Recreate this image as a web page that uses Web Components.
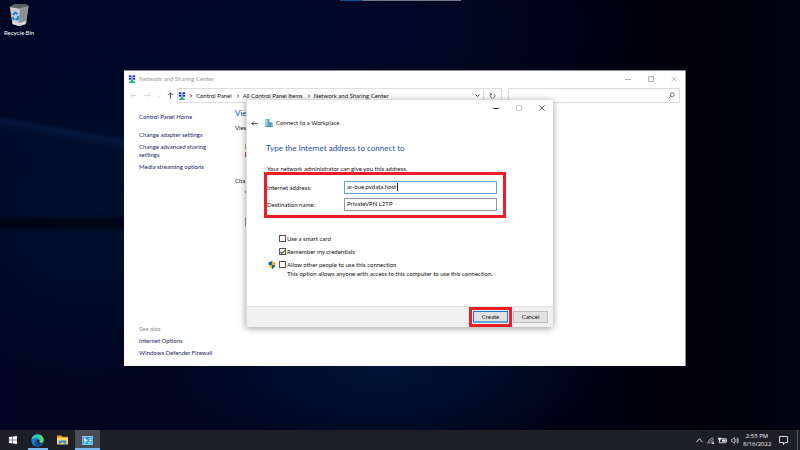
<!DOCTYPE html>
<html lang="en">
<head>
<meta charset="utf-8">
<title>Desktop</title>
<style>
html, body { margin: 0; height: 100%; }
body { font: 6px/8px Lato, "Open Sans", sans-serif; font-variant-ligatures: none; color: #111; overflow: hidden; }
</style>
</head>
<body>
<desk-top>
  <desktop-icon slot="icons">Recycle Bin</desktop-icon>
  <network-window slot="windows"></network-window>
  <connect-dialog slot="windows"></connect-dialog>
  <task-bar slot="taskbar"></task-bar>
</desk-top>
<script>
const define = (name, html, setup) => {
  const template = document.createElement('template');
  template.innerHTML = html;
  customElements.define(name, class extends HTMLElement {
    constructor() {
      super();
      this.attachShadow({ mode: 'open' }).append(template.content.cloneNode(true));
    }
    connectedCallback() { if (setup) setup(this, this.shadowRoot); }
  });
};

const base = `* { box-sizing: border-box; } svg { display: block; flex: none; }
button { font: inherit; color: inherit; background: none; border: 0; padding: 0; margin: 0; }
h1, h2, p, ul { margin: 0; padding: 0; font-weight: 400; list-style: none; }
a { color: inherit; text-decoration: none; }`;

const icons = {
  center: ['0 0 16 16', '<path fill="#b9cbe6" d="M1 0h14v11H1z"/><path fill="#1c2c9c" d="M2 1h4v3H2zM10 1h4v3h-4zM2 6h4v3H2zM10 6h4v3h-4z"/><path fill="#6f8fd0" d="M7 1h2v9H7z"/><path fill="#25b779" d="M6 10h4v2l4 2v2H2v-2l4-2z"/>'],
  left: ['0 0 16 16', '<path fill="none" stroke="currentColor" stroke-width="1.8" d="M15 8H2M7 3 2 8l5 5"/>'],
  right: ['0 0 16 16', '<path fill="none" stroke="currentColor" stroke-width="1.8" d="M1 8h13M9 3l5 5-5 5"/>'],
  up: ['0 0 16 16', '<path fill="none" stroke="currentColor" stroke-width="2.2" d="M8 15V2M3 7l5-5 5 5"/>'],
  down: ['0 0 16 16', '<path fill="none" stroke="currentColor" stroke-width="2.6" d="m2 5 6 6 6-6"/>'],
  chevron: ['0 0 16 16', '<path fill="none" stroke="currentColor" stroke-width="3" d="m5 2 6 6-6 6"/>'],
  caretup: ['0 0 16 16', '<path fill="none" stroke="currentColor" stroke-width="2.2" d="m1 12 7-8 7 8"/>'],
  refresh: ['0 0 16 16', '<path fill="none" stroke="currentColor" stroke-width="1.8" d="M11 4a5.500 5.500 0 1 1-6 0M3 2v4h4"/>'],
  search: ['0 0 16 16', '<circle cx="10" cy="6" r="4.5" fill="none" stroke="currentColor" stroke-width="1.8"/><path stroke="currentColor" stroke-width="2" d="m7 9-6 6"/>'],
  min: ['0 0 6 6', '<path stroke="currentColor" d="M0 3.5h6"/>'],
  max: ['0 0 6 6', '<path fill="none" stroke="currentColor" d="M.5.5h5v5h-5z"/>'],
  close: ['0 0 6 6', '<path stroke="currentColor" stroke-width=".8" d="m.5.5 5 5m0-5-5 5"/>'],
  work: ['0 0 16 16', '<path fill="#5ca8cf" d="M1 0h8v16H1z"/><path fill="#8fd0e8" d="M2 1h3v14H2z"/><path fill="#3b7fa8" d="M6 2h2v1H6zM6 5h2v1H6zM6 8h2v1H6z"/><path fill="#2f83b5" d="M8 7h7v9H8z"/><path fill="#9ed6ef" d="M9 9h2v2H9zM12 9h2v2h-2zM9 12h2v2H9zM12 12h2v2h-2z"/><path fill="#3a6b88" d="M0 15h16v1H0z"/>'],
  shield: ['0 0 16 16', '<path fill="#f2b51c" d="M8 0c2 2 5 2 7 2 0 7-2 11-7 14C3 13 1 9 1 2c2 0 5 0 7-2z"/><path fill="#205c9e" d="M8 0v8H1.500Q1 5 1 2c2 0 5 0 7-2zM8 8h6.500c-1 4-3 6-6.500 8z"/>'],
  bin: ['0 0 40 44', '<path fill="#9a9da3" d="m2 6 8-5h25l4 3-5 36-14 4-13-4z"/><path fill="#c6c9ce" d="m2 6 20 4-2 34-13-4z"/><path fill="#8c9097" d="m22 10 17-6-5 36-14 4z"/><path fill="#5c6068" d="m2 6 8-5h25l4 3-17 5z"/><path fill="#d9dbe0" d="m8 35 13 3 13-4-1 6-13 4-12-4z"/><path fill="none" stroke="#1683d8" stroke-width="4" d="m8 22 4-5 5 3M19 24l-2 7-4-1M7 26l3 6"/>'],
  start: ['0 0 16 16', '<path fill="#fff" d="M0 2.200 7 1v6.500H0zM8 .900 16 0v7.500H8zM0 8.500h7V15l-7-1.200zM8 8.500h8V16l-8-1.100z"/>'],
  edge: ['0 0 24 24', '<circle cx="12" cy="12" r="11.500" fill="#1680d0"/><path fill="#37c6b4" d="M1 10C2 3 8 0 13 1c7 0 11 6 10 11-1 4-5 5-8 4 2-4 0-8-5-8-4 0-8 1-9 2z"/><path fill="#67d85b" d="M15 1c6 2 9 7 8 11-1 3-4 5-8 4 4-4 4-10 0-15z"/><path fill="#0c4fa0" d="M8 12c0-2 2-4 4-4-6 5 0 12 9 9-3 5-8 7-12 5-3-2-3-7-1-10z"/><path fill="#1e2027" d="M11 12c1-3 5-2 5 1 0 1-1 2-1 3l6 1c-5 3-11 1-10-5z"/>'],
  folder: ['0 0 24 20', '<path fill="#e7a51c" d="M0 0h9l3 3h12v17H0z"/><path fill="#ffd660" d="M0 5h24v14H0z"/><path fill="#3b8ede" d="M4 11h16v9h-4v-4H8v4H4z"/>'],
  panel: ['0 0 24 20', '<path fill="#8fd3f5" d="M0 0h24v20H0z"/><path fill="#32a3df" d="M1 2h22v16H1z"/><circle cx="8" cy="8" r="4.500" fill="#d9f3ff"/><path fill="#116aa8" d="M8 8V3a5 5 0 0 1 5 5z"/><path fill="#d9f3ff" d="M16 5h5v2h-5zM16 9h5v2h-5zM4 14h4v2H4zM13 14h8v2h-8z"/>'],
  wifi: ['0 0 16 16', '<g fill="none" stroke="#ddd" stroke-width="1.500"><path d="M2 15C2 8 8 2 15 2M6 15c0-5 4-9 9-9M10 15c0-3 2-5 5-5"/></g><circle cx="14" cy="14" r="2" fill="#fff"/><path stroke="#aaa" d="m1 15 4-4"/>'],
  battery: ['0 0 20 14', '<path fill="none" stroke="#eee" stroke-width="1.800" d="M5 3h13v9H3V8"/><path fill="#eee" d="M9 5h7v5H9zM18 5h2v5h-2zM0 1h7v4H5v4H2V5H0z"/>'],
  sound: ['0 0 18 16', '<path fill="none" stroke="#ddd" stroke-width="1.500" d="M1 5h3l4-4v14l-4-4H1zM10 5q2 3 0 6M13 3q3 5 0 10M15 1q4 7 0 14"/>'],
  note: ['0 0 18 18', '<path fill="none" stroke="#eee" stroke-width="1.800" d="M1 1h16v12h-5l-3 4v-4H1z"/>']
};

/* <ui-icon name w h>: one glyph from the set above */
customElements.define('ui-icon', class extends HTMLElement {
  connectedCallback() {
    const [box, body] = icons[this.getAttribute('name')];
    const w = this.getAttribute('w') || 8, h = this.getAttribute('h') || w;
    const root = this.shadowRoot || this.attachShadow({ mode: 'open' });
    root.innerHTML = `<style>:host{display:block;flex:none}svg{display:block}</style>
      <svg width="${w}" height="${h}" viewBox="${box}" aria-hidden="true">${body}</svg>`;
  }
});

define('desk-top', `<style>${base}
:host { display: flex; flex-direction: column; height: 100vh; position: relative;
  background:
    linear-gradient(190deg, transparent 29%, #0a336a55 30%, #06245018 32%, transparent 40%) 0 0 / 124px 100% no-repeat,
    linear-gradient(transparent, #00020eb0 30%, #00020eb0 70%, transparent) 0 214px / 124px 18px no-repeat,
    radial-gradient(ellipse 190px 170px at 11% 48%, #00112f, transparent),
    radial-gradient(ellipse 220px 90px at 48% 82%, #001437, transparent),
    radial-gradient(ellipse 380px 130px at 32% 6%, #00082c, transparent),
    linear-gradient(90deg, #000420, #00041c 50%, #00000a 88%, #000412); }
.strip { position: absolute; top: 0; left: 50%; width: 121px; height: 1px; margin-left: -60px;
  background: linear-gradient(90deg, #064f8c 23px, #737988 23px); }
main { flex: 1; position: relative; min-height: 0; }
</style><div class="strip"></div><main><slot name="icons"></slot><slot name="windows"></slot></main><slot name="taskbar"></slot>`);

define('desktop-icon', `<style>${base}
:host { display: inline-flex; flex-direction: column; align-items: center; gap: 3px; padding: 4px; color: #fff; }
</style><ui-icon name="bin" w="20" h="22"></ui-icon><span><slot></slot></span>`);

define('caption-buttons', `<style>${base}
:host { display: flex; color: var(--caption, #333); }
button { width: 23px; height: 15px; display: grid; place-items: center; }
.max { color: var(--max, inherit); }
</style><button aria-label="Minimize"><ui-icon name="min" w="6"></ui-icon></button>
<button class="max" aria-label="Maximize"><ui-icon name="max" w="6"></ui-icon></button>
<button aria-label="Close"><ui-icon name="close" w="6"></ui-icon></button>`);

define('address-bar', `<style>${base}
:host { display: flex; align-items: center; padding: 0 5px; height: 15px; color: #555; }
.nav { display: flex; align-items: center; width: 48px; padding-left: 1px; gap: 7px; }
.nav button { color: #ccc; }
.nav button:nth-child(3) { margin-left: -1px; }
.nav button:last-child { color: #444; margin-left: -1px; }
.path { flex: 1 1 325px; height: 15px; border: 1px solid #ddd; display: flex; align-items: center; gap: 3px; min-width: 0; color: #111; }
.path a { margin-right: 1px; }
.path .fill { flex: 1; }
.path .reload { width: 18px; height: 13px; border-left: 1px solid #ddd; display: grid; place-items: center; color: #555; }
.search { flex: 0 1 172px; height: 15px; margin-left: 6px; border: 1px solid #ddd; display: flex; align-items: center; padding-right: 4px; }
input { flex: 1; min-width: 0; border: 0; outline: 0; font: inherit; background: none; padding: 0 4px; height: 12px; }
</style>
<div class="nav"><button aria-label="Back"><ui-icon name="left" w="7"></ui-icon></button><button aria-label="Forward"><ui-icon name="right" w="7"></ui-icon></button><button aria-label="Recent"><ui-icon name="down" w="4"></ui-icon></button><button aria-label="Up"><ui-icon name="up" w="7"></ui-icon></button></div>
<div class="path"><ui-icon name="center" w="8"></ui-icon><ui-icon name="chevron" w="4"></ui-icon><a href="#">Control Panel</a><ui-icon name="chevron" w="4"></ui-icon><a href="#">All Control Panel Items</a><ui-icon name="chevron" w="4"></ui-icon><a href="#">Network and Sharing Center</a><span class="fill"></span><button aria-label="History"><ui-icon name="down" w="5"></ui-icon></button><button class="reload" aria-label="Refresh"><ui-icon name="refresh" w="7"></ui-icon></button></div>
<div class="search"><input type="search" aria-label="Search Control Panel"><ui-icon name="search" w="7"></ui-icon></div>`);

define('network-window', `<style>${base}
:host { position: absolute; left: 124px; right: 114px; top: 70px; bottom: 64px; display: flex; flex-direction: column;
  background: #fff; border-top: 1px solid #8a8b96; border-right: 1px solid #8a8b96; }
header { display: flex; align-items: center; padding-left: 4px; gap: 3px; height: 15px; color: #999; --caption: #b4b4b4; }
header h1 { font-size: 6px; flex: 1; }
address-bar { margin-top: 2px; }
.body { flex: 1; display: grid; grid-template-columns: 111px 1fr; min-height: 0; }
nav { display: flex; flex-direction: column; gap: 4px; padding: 10px 20px 9px 15px; color: #1b1e66; }
.home { margin-bottom: 6px; }
.also { margin-top: auto; color: #888; }
section { padding: 5px 0; display: flex; flex-direction: column; }
h2 { font-size: 8px; line-height: 10px; color: #1f4fa8; }
.view { margin-top: 6px; }
.net { margin: 11px 0 0 10px; }
.cha { margin-top: 20px; }
.marks { margin-left: 10px; }
</style>
<header><ui-icon name="center" w="8"></ui-icon><h1>Network and Sharing Center</h1><caption-buttons></caption-buttons></header>
<address-bar></address-bar>
<div class="body">
<nav><a class="home" href="#">Control Panel Home</a><a href="#">Change adapter settings</a><a href="#">Change advanced sharing settings</a><a href="#">Media streaming options</a>
<span class="also">See also</span><a href="#">Internet Options</a><a href="#">Windows Defender Firewall</a></nav>
<section><h2>Vie</h2><p class="view">View</p>
<svg class="net" width="2" height="14" viewBox="0 0 2 14"><path fill="#d9a36a" d="M0 1h2v5H0z"/><path fill="#b8564a" d="M0 9h2v5H0z"/></svg>
<p class="cha">Cha</p>
<svg class="marks" width="4" height="44" viewBox="0 0 4 44"><path fill="#61bd57" d="M0 6h4v2H0z"/><path fill="#ddd" d="M0 13h4v1H0z"/><path fill="none" stroke="#aaa" d="M5 32.500H.5v9H5"/></svg></section>
</div>`);

define('highlight-box', `<style>${base}
:host { display: block; border: 3px solid #ee1c25; }
</style><slot></slot>`);

define('text-field', `<style>${base}
:host { display: grid; grid-template-columns: 77px 1fr; align-items: center; height: 13px; }
input { width: 100%; height: 13px; border: 1px solid #999; background: #fff; font: inherit; color: #111; padding: 0 2px 2px; outline: 0; }
:host([active]) input { border-color: #5ba4e0; background: linear-gradient(#222, #222) 52px 1px / 1px 8px no-repeat #fff; }
</style><label for="f"></label><input id="f" type="text">`, (el, root) => {
  root.querySelector('label').textContent = el.getAttribute('label');
  root.querySelector('input').value = el.getAttribute('value');
});

define('check-option', `<style>${base}
:host { display: flex; height: 13px; align-items: center; }
.badge { width: 11px; }
input { appearance: none; width: 7px; height: 7px; margin: 0 1px 0 0; border: 1px solid #555; background: #fff; display: grid; place-items: center; }
input:checked::after { content: ""; width: 4px; height: 2px; border: solid #555; border-width: 0 0 1px 1px; transform: rotate(-45deg); margin-bottom: 1px; }
</style><span class="badge"><slot name="badge"></slot></span><input id="c" type="checkbox"><label for="c"></label>`, (el, root) => {
  root.querySelector('label').textContent = el.getAttribute('label');
  root.querySelector('input').checked = el.hasAttribute('checked');
});

define('push-button', `<style>${base}
:host { display: block; }
button { display: block; width: 35px; height: 12px; border: 1px solid #bdbdbd; background: #e1e1e1; line-height: 8px; color: #111; }
:host([primary]) button { border-color: #1679cf; border-bottom: 2px solid #5fa9e6; }
</style><button type="button"><slot></slot></button>`);

define('connect-dialog', `<style>${base}
:host { position: absolute; left: 246px; right: 247px; top: 100px; bottom: 103px; display: flex; flex-direction: column;
  background: #fff; border-left: 1px solid #ddd; box-shadow: 0 1px 7px #0006; --max: #ccc; }
caption-buttons { align-self: flex-end; }
.crumb { display: flex; align-items: center; height: 16px; padding-left: 4px; color: #222; }
.crumb button { margin-right: 7px; }
.crumb ui-icon[name=work] { margin-right: 3px; }
form { flex: 1; padding: 12px 47px 0 17px; }
h1 { font-size: 8px; line-height: 10px; color: #1f4fa8; padding-left: 2px; }
.lead { margin-top: 12px; padding-left: 3px; }
.fields { margin-top: -1px; padding: 6px 6px 4px 0; }
text-field + text-field { margin-top: 4px; }
.opts { margin-top: 14px; padding-left: 4px; white-space: nowrap; }
.note { padding-left: 19px; margin-top: -1px; }
footer { display: flex; align-items: center; justify-content: flex-end; height: 21px; background: #f0f0f0; border-top: 1px solid #e2e2e2; padding-right: 5px; }
footer highlight-box { padding: 1px; margin-right: 1px; }
</style>
<caption-buttons></caption-buttons>
<div class="crumb"><button aria-label="Back"><ui-icon name="left" w="7"></ui-icon></button><ui-icon name="work" w="8"></ui-icon><span>Connect to a Workplace</span></div>
<form><h1>Type the Internet address to connect to</h1><p class="lead">Your network administrator can give you this address.</p>
<highlight-box class="fields"><text-field active label="Internet address:" value="ar-bue.pvdata.host"></text-field><text-field label="Destination name:" value="PrivateVPN L2TP"></text-field></highlight-box>
<div class="opts"><check-option label="Use a smart card"></check-option><check-option checked label="Remember my credentials"></check-option><check-option label="Allow other people to use this connection"><ui-icon slot="badge" name="shield" w="8"></ui-icon></check-option><p class="note">This option allows anyone with access to this computer to use this connection.</p></div></form>
<footer><highlight-box><push-button primary>Create</push-button></highlight-box><push-button>Cancel</push-button></footer>`);

define('task-bar', `<style>${base}
:host { display: flex; height: 20px; background: #1e1f26; color: #eee; align-items: stretch; }
.app { width: 25px; display: grid; place-items: center; border-bottom: 2px solid transparent; border-top: 2px solid transparent; }
.run { background: linear-gradient(#76b9ed, #76b9ed) 50% 100% / 20px 2px no-repeat border-box; }
.on { background: #4a4c53; border-top-color: #4a4c53; border-bottom-color: #76b9ed; }
.space { flex: 1; }
.tray { display: flex; align-items: center; gap: 4px; padding-right: 4px; }
time { text-align: center; font-family: "Open Sans", sans-serif; width: 28px; align-self: center; }
.note { margin: 0 9px 0 8px; }
.peek { width: 3px; border-left: 1px solid #555860; }
</style>
<button class="app" aria-label="Start"><ui-icon name="start" w="8"></ui-icon></button><button class="app run" aria-label="Edge"><ui-icon name="edge" w="13"></ui-icon></button><button class="app" aria-label="File Explorer"><ui-icon name="folder" w="11" h="10"></ui-icon></button><button class="app on" aria-label="Control Panel"><ui-icon name="panel" w="11" h="9"></ui-icon></button>
<span class="space"></span>
<div class="tray"><ui-icon name="caretup" w="7"></ui-icon><ui-icon name="wifi" w="7"></ui-icon><ui-icon name="battery" w="9" h="7"></ui-icon><ui-icon name="sound" w="8" h="7"></ui-icon></div>
<time datetime="2022-08-16T14:55">2:55 PM<br>8/16/2022</time>
<button class="note" aria-label="Notifications"><ui-icon name="note" w="9"></ui-icon></button><span class="peek"></span>`);
</script>
</body>
</html>
